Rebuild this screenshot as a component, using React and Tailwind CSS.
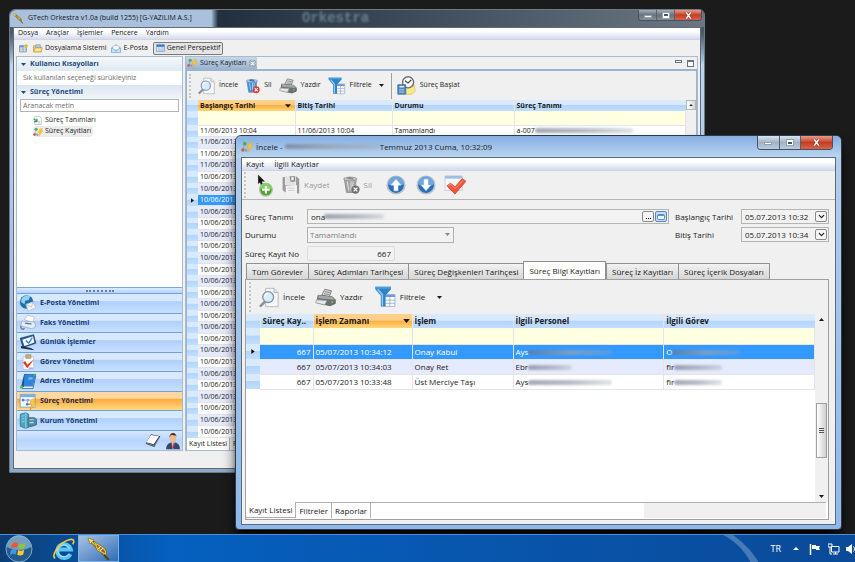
import { ChevronDown } from "lucide-react";

const menus = ["Dosya", "Araçlar", "İşlemler", "Pencere", "Yardım"];

const modules = [
  { name: "E-Posta Yönetimi", icon: GlobeIcon },
  { name: "Faks Yönetimi", icon: FaxIcon },
  { name: "Günlük İşlemler", icon: DailyIcon },
  { name: "Görev Yönetimi", icon: TaskIcon },
  { name: "Adres Yönetimi", icon: BookIcon },
  { name: "Süreç Yönetimi", icon: ProcessIcon, active: true },
  { name: "Kurum Yönetimi", icon: BuildingIcon },
];

const oldRows = Array.from({ length: 27 }, (_, i) => (i < 4 ? "11/06/2013 10:04" : "10/06/2013 10:04"));

const tabs = [
  "Tüm Görevler",
  "Süreç Adımları Tarihçesi",
  "Süreç Değişkenleri Tarihçesi",
  "Süreç Bilgi Kayıtları",
  "Süreç İz Kayıtları",
  "Süreç İçerik Dosyaları",
];

const records = [
  { no: 667, time: "05/07/2013 10:34:12", action: "Onay Kabul", person: "Ays", task: "O" },
  { no: 667, time: "05/07/2013 10:34:03", action: "Onay Ret", person: "Ebr", task: "fir" },
  { no: 667, time: "05/07/2013 10:33:48", action: "Üst Merciye Taşı", person: "Ays", task: "fir" },
];

const headBg = "bg-linear-to-b from-[#d9eaff] from-45% via-[#b3d4fd] via-50% to-[#c1deff]";
const sortBg = "bg-linear-to-b from-[#ffd08a] from-45% via-[#ffad3d] via-50% to-[#ffd77c]";

/* ---------- icons ---------- */

function TrumpetIcon({ className }) {
  return (
    <svg viewBox="0 0 24 24" className={className} aria-hidden="true">
      <path d="M3 3l15 15" stroke="#6e5012" strokeWidth="3" />
      <path d="M3 3l15 15" stroke="#f1cf55" strokeWidth="1.600" />
      <path d="M8 6l8 5c2 2 3 4 2.500 6L11 13z" fill="none" stroke="#7a5914" strokeWidth="2.200" />
      <path d="M8 6l8 5c2 2 3 4 2.500 6L11 13z" fill="none" stroke="#e6bd3c" strokeWidth="1.200" />
      <path d="M11 12l3-3M13 14l3-3" stroke="#fff0a0" strokeWidth="1" />
      <path d="M17 18l5 5" stroke="#54400f" strokeWidth="2" />
      <path d="M1 1l6 2-4 4z" fill="#f7de72" stroke="#8a6613" strokeWidth=".6" />
    </svg>
  );
}

function FlowIcon({ className }) {
  return (
    <svg viewBox="0 0 16 16" className={className} aria-hidden="true">
      <path d="M5 4L3 11h5" stroke="#8a98a8" strokeWidth="1" fill="none" />
      <circle cx="5" cy="3.500" r="2.500" fill="#4fae4a" />
      <circle cx="2.500" cy="12" r="2.200" fill="#d05a4b" />
      <circle cx="7" cy="12.500" r="1.700" fill="#8aa0c4" />
      <path d="M11 3l4-1-2 4h3l-7 9 2-6H8z" fill="#ffc629" stroke="#e2a01c" strokeWidth=".5" />
    </svg>
  );
}

function SearchDocIcon({ className }) {
  return (
    <svg viewBox="0 0 24 24" className={className} aria-hidden="true">
      <path d="M8 1h10l5 5v17H8z" fill="#f7f8fa" stroke="#a9b0b8" />
      <path d="M18 1v5h5" fill="#dfe4ea" stroke="#a9b0b8" />
      <path d="M2 22l6-6" stroke="#8b8f96" strokeWidth="3" strokeLinecap="round" />
      <circle cx="11" cy="11.500" r="6.500" fill="#d9ecfb" stroke="#8194a8" strokeWidth="1.600" />
      <path d="M7 11a4 4 0 014-4" stroke="#fff" strokeWidth="1.500" fill="none" />
    </svg>
  );
}

function TrashIcon({ className, muted }) {
  return (
    <svg viewBox="0 0 24 24" className={className} aria-hidden="true">
      <path d="M3 4h16l-2 18H6z" fill={muted ? "#a3a3a3" : "#3f8fd8"} stroke={muted ? "#8a8a8a" : "#4b87bb"} />
      <path d="M7 7l2 12M12 7v12M15 7l-1 10" stroke={muted ? "#dcdcdc" : "#9fd0f8"} strokeWidth="1.500" />
      <ellipse cx="11" cy="4" rx="9" ry="2.500" fill={muted ? "#c9c9c9" : "#a7cdea"} stroke={muted ? "#8c8c8c" : "#7f97b0"} />
      <path d="M6 4l3-3 5 1 2 3z" fill={muted ? "#8a8a8a" : "#4c6f96"} />
      <circle cx="18" cy="18" r="5.500" fill={muted ? "#6e6e6e" : "#e5382e"} />
      <path d="M15.500 15.500l5 5m0-5l-5 5" stroke="#fff" strokeWidth="1.800" />
    </svg>
  );
}

function PrinterIcon({ className }) {
  return (
    <svg viewBox="0 0 28 24" className={className} aria-hidden="true">
      <path d="M9 9l4-8 9 2-3 8z" fill="#d5d5d5" stroke="#666" />
      <path d="M13 4l7 1.500M12 7l7 1" stroke="#777" />
      <path d="M4 9l19 2 4 4v5l-7 3-17-4z" fill="#6d7276" stroke="#4d5154" />
      <path d="M4 9l19 2 3 4-21-2z" fill="#a3a7aa" />
      <path d="M2 15l14 1-3 6-12-3z" fill="#e5e7e9" stroke="#8b8f92" />
      <circle cx="23" cy="18" r="1.200" fill="#6fd04e" />
    </svg>
  );
}

function FunnelIcon({ className }) {
  return (
    <svg viewBox="0 0 26 28" className={className} aria-hidden="true">
      <path d="M12 11h13v15H12z" fill="#fff" stroke="#8aa6cf" />
      <path d="M12 11h13v3H12z" fill="#6f9bdc" />
      <path d="M12 18h13M12 22h13M18.500 14v12" stroke="#8aa6cf" />
      <path d="M0 1h20v3l-7 8v14H7V12L0 4z" fill="#2d83c6" />
      <path d="M0 1h20v2.500H0z" fill="#4f9edb" />
      <path d="M3 4l6 7v14" stroke="#8cc9f2" strokeWidth="2" fill="none" />
    </svg>
  );
}

function ClockIcon({ className }) {
  return (
    <svg viewBox="0 0 24 24" className={className} aria-hidden="true">
      <path d="M11 14l11-3 1 8-4 4-7 1z" fill="#f4ea8c" stroke="#d2c35a" strokeWidth=".8" />
      <circle cx="14" cy="8" r="7" fill="#fbfbfb" stroke="#6c7075" strokeWidth="1.800" />
      <path d="M10 6l4 3 4-4" stroke="#333" strokeWidth="1.400" fill="none" />
      <path d="M1 11h10v12H1z" fill="#4d87bb" stroke="#3e6b93" />
      <path d="M3 12.500h6v2H3z" fill="#cfe8ff" />
      <path d="M3 17.500h6M3 20.500h6" stroke="#d3e5f5" strokeWidth="1.600" strokeDasharray="1.500 1" />
    </svg>
  );
}

function FloppyIcon({ className }) {
  return (
    <svg viewBox="0 0 24 24" className={className} aria-hidden="true">
      <path d="M2 2h3v10h14V1l4 3v19l-3-1v-9H6v8H5l-3-3z" fill="#9b9b9b" />
      <path d="M5 1h13v11H6z" fill="#e2e2e2" />
      <path d="M11 1h7v7h-6z" fill="#8d8d8d" />
      <path d="M13 2h3v4h-3z" fill="#f3f3f3" />
      <path d="M6 13l14-1v9l-13 1z" fill="#f2f2f2" />
      <path d="M9 16h8M9 19h8" stroke="#c6c6c6" />
    </svg>
  );
}

function RoundArrow({ className, down }) {
  return (
    <svg viewBox="0 0 24 24" className={className} aria-hidden="true">
      <circle cx="12" cy="12" r="10.500" fill="#2c6db8" stroke="#b9c3cd" strokeWidth="2" />
      <path d="M2.500 11a9.500 9.500 0 0119 0c-5 3-14 3-19 0z" fill="#6ea6dd" />
      <path
        d={down ? "M12 19l-6-7h3.500V5h5v7H18z" : "M12 5l6 7h-3.500v7h-5v-7H6z"}
        fill="#fff"
        stroke="#cfe0f2"
        strokeWidth=".5"
      />
    </svg>
  );
}

function CheckWindowIcon({ className }) {
  return (
    <svg viewBox="0 0 24 22" className={className} aria-hidden="true">
      <path d="M1 1h19v16H1z" fill="#f4f8fd" stroke="#c3d0e0" />
      <path d="M1 1h19v3H1z" fill="#a3bedd" />
      <path d="M3 12l4-3 5 4 8-9 4 3-12 14z" fill="#f4543a" stroke="#d23a22" strokeWidth=".8" />
      <path d="M4 12l3-2 5 5 9-9" stroke="#ff9a7d" fill="none" />
    </svg>
  );
}

function AddIcon({ className }) {
  return (
    <svg viewBox="0 0 18 24" className={className} aria-hidden="true">
      <path d="M2 0l8 8H6.500L8 12 5.500 13 4 9 2 11z" fill="#111" stroke="#fff" strokeWidth=".5" />
      <circle cx="10.500" cy="16.500" r="6.700" fill="#4aa52b" stroke="#b5bfb0" strokeWidth="1.500" />
      <path d="M4.500 15a6 6 0 0112 0c-3 2-9 2-12 0z" fill="#86cf66" />
      <path d="M10.500 12.500v8M6.500 16.500h8" stroke="#fff" strokeWidth="2.200" />
    </svg>
  );
}

function GlobeIcon({ className }) {
  return (
    <svg viewBox="0 0 24 24" className={className} aria-hidden="true">
      <circle cx="10" cy="10" r="9.500" fill="#1f6fae" />
      <path d="M3 5c4-5 9-5 12-3l-2 5-5 1-1 5-5-3zM12 13l6-4 2 4-5 5z" fill="#8fd4ea" />
      <path d="M9 13l10-3 4 8-11 5z" fill="#f4f4f4" stroke="#b3b9bf" />
      <path d="M9 13l8 4 2-7" fill="none" stroke="#b3b9bf" />
    </svg>
  );
}

function FaxIcon({ className }) {
  return (
    <svg viewBox="0 0 24 24" className={className} aria-hidden="true">
      <path d="M7 8l4-6 10 2-2 8z" fill="#fff" stroke="#a9b7ca" />
      <path d="M3 10l18 1 2 6-5 4-16-4z" fill="#e6edf5" stroke="#8fa2bd" />
      <path d="M8 13l9 1" stroke="#4779b8" strokeWidth="2" />
      <path d="M2 17c-1 4 3 6 5 3" stroke="#6d7b8e" strokeWidth="2" fill="none" />
    </svg>
  );
}

function DailyIcon({ className }) {
  return (
    <svg viewBox="0 0 24 24" className={className} aria-hidden="true">
      <path d="M1 6l19-5 3 12-18 6z" fill="#285d9c" stroke="#173e6e" />
      <path d="M4 8l15-5 2 9-14 5z" fill="#fff" />
      <path d="M9 9l4 4 5-8" stroke="#3a86d2" strokeWidth="2" fill="none" />
      <path d="M2 17l15 3 4 3-19-3z" fill="#1b2d46" />
    </svg>
  );
}

function TaskIcon({ className }) {
  return (
    <svg viewBox="0 0 24 24" className={className} aria-hidden="true">
      <path d="M5 4h15v18H5z" fill="#fdfdfd" stroke="#b4bcc6" />
      <path d="M9 1h7v5H9z" fill="#c9b27a" stroke="#a08e5c" />
      <path d="M5 12l6 8L21 7l-10 8-3-5z" fill="#e5331f" />
      <path d="M13 20h6" stroke="#8db2e0" strokeWidth="2" />
    </svg>
  );
}

function BookIcon({ className }) {
  return (
    <svg viewBox="0 0 24 24" className={className} aria-hidden="true">
      <path d="M7 2h16l-4 17H3z" fill="#2a7fd1" stroke="#174f8c" />
      <path d="M3 19l1 3h15l4-18" fill="#e9eef4" stroke="#174f8c" />
      <path d="M7 2L3 19l3 1 4-18z" fill="#174f8c" />
      <path d="M7 2h16l-4 17H6z" fill="#2f86d8" />
      <path d="M13 6h6l-1 3h-6z" fill="#7db9ee" />
      <path d="M1 18h4v4H1zM20 1h3v3h-3z" fill="#58b34b" />
    </svg>
  );
}

function ProcessIcon({ className }) {
  return (
    <svg viewBox="0 0 24 24" className={className} aria-hidden="true">
      <path d="M1 2h21v18H1z" fill="#f8fbff" stroke="#5d8fc9" />
      <path d="M1 2h21v4H1z" fill="#79b0e6" />
      <path d="M5 10h6v6h5M11 10h5" stroke="#7088a8" fill="none" />
      <circle cx="5" cy="10" r="2" fill="#4a77c4" />
      <circle cx="11" cy="16" r="2" fill="#4a77c4" />
      <circle cx="12" cy="10" r="2" fill="#8aa9dc" />
      <path d="M17 9l6-1-3 5h4l-9 11 2-8h-3z" fill="#ffc83a" stroke="#d68b12" strokeWidth=".7" />
    </svg>
  );
}

function BuildingIcon({ className }) {
  return (
    <svg viewBox="0 0 24 24" className={className} aria-hidden="true">
      <path d="M1 3l8-2 4 2v19l-5 1-7-3z" fill="#4aa5c4" stroke="#29728e" />
      <path d="M9 1v22M3 6l4-1M3 10l4-1M3 14l4-1" stroke="#b9e6f3" />
      <path d="M12 8h9l3 2v8l-9 3-3-2z" fill="#4d8ea6" stroke="#35606f" />
      <path d="M14 11h6M14 15h6" stroke="#bcd7e6" strokeWidth="1.500" />
    </svg>
  );
}

function NotepadIcon({ className }) {
  return (
    <svg viewBox="0 0 24 24" className={className} aria-hidden="true">
      <path d="M9 2l14 3-9 16-13-5z" fill="#333a44" />
      <path d="M9 3l12 2-8 12-11-3z" fill="#fbfcfe" />
      <path d="M2 15l12 4 8-13" stroke="#9aa3ae" strokeWidth="1" fill="none" />
    </svg>
  );
}

function PersonIcon({ className }) {
  return (
    <svg viewBox="0 0 20 26" className={className} aria-hidden="true">
      <path d="M0 25c0-7 4-9 7-10h6c4 1 7 3 7 10z" fill="#384668" />
      <path d="M8 15h4l-1 9H9z" fill="#fff" />
      <path d="M9.500 16h1.500l.5 6-1.200 2-1.300-2z" fill="#b9303a" />
      <ellipse cx="10" cy="8.500" rx="4.500" ry="6.500" fill="#f0b98d" />
      <path d="M5 8c-1-8 10-9 10-1l-1-2c-3 0-5 0-7-1z" fill="#4a2f1c" />
    </svg>
  );
}

function GridPlusIcon({ className }) {
  return (
    <svg viewBox="0 0 16 16" className={className} aria-hidden="true">
      <path d="M1 3h12v11H1z" fill="#fff" stroke="#6d88a8" strokeWidth="1.500" />
      <path d="M1 7h12M7 7v7M1 10.500h12" stroke="#6d88a8" strokeWidth="1.200" />
      <path d="M1 3h8v3H1z" fill="#6ca0dc" />
      <path d="M12.500 0v7M9 3.500h7" stroke="#e6b422" strokeWidth="2.200" />
    </svg>
  );
}

function FolderIcon({ className }) {
  return (
    <svg viewBox="0 0 18 16" className={className} aria-hidden="true">
      <path d="M1 3h6l2 2h6v9H1z" fill="#f3cf6a" stroke="#b58a20" />
      <path d="M5 1h8v6H5z" fill="#a8cdf2" stroke="#4f80b5" strokeWidth=".7" />
      <path d="M1 14l3-7h13l-3 7z" fill="#ffe79a" stroke="#b58a20" />
    </svg>
  );
}

function MailIcon({ className }) {
  return (
    <svg viewBox="0 0 18 16" className={className} aria-hidden="true">
      <path d="M1 7l8-6 8 6v8H1z" fill="#a9cff4" stroke="#6b9fd2" />
      <path d="M4 3h10v7H4z" fill="#fff" stroke="#9dbbd9" strokeWidth=".7" />
      <path d="M1 7l8 6 8-6v8H1z" fill="#d3e8fb" stroke="#6b9fd2" />
    </svg>
  );
}

function PerspectiveIcon({ className }) {
  return (
    <svg viewBox="0 0 16 14" className={className} aria-hidden="true">
      <path d="M1 1h14v12H1z" fill="#e9f3fd" stroke="#4a7fb9" />
      <path d="M1 1h14v4H1z" fill="#3f7cc0" />
      <path d="M5 5v8M5 9h10" stroke="#6b9bd0" />
      <path d="M9 6.500h4M8 11h5" stroke="#8bb4e0" strokeWidth="1.500" />
    </svg>
  );
}

function DefinitionIcon({ className }) {
  return (
    <svg viewBox="0 0 16 16" className={className} aria-hidden="true">
      <path d="M3 1h9l3 3v11H3z" fill="#fdfdfd" stroke="#a3abb4" />
      <path d="M1 5l6 4M7 5v5H2" stroke="#35a046" strokeWidth="2.200" fill="none" />
      <path d="M9 10h4M9 12.500h4" stroke="#7aa6d6" />
    </svg>
  );
}

function StartOrb({ className }) {
  return (
    <svg viewBox="0 0 28 28" className={className} aria-hidden="true">
      <circle cx="14" cy="14" r="13" fill="#245a8e" stroke="#7fa9cb" />
      <path d="M2 12a12 12 0 0124 0c-6 4-18 4-24 0z" fill="#8db5d3" opacity=".75" />
      <path d="M7 9c2-2 4-2 6-1l-1 5c-2-1-4-1-6 1z" fill="#f0572b" />
      <path d="M14.500 8.500c2 1 4 1 6-1l-1 5.500c-2 1.500-4 1-6 .3z" fill="#8cc63e" />
      <path d="M5.800 15.500c2-2 4-1.500 6-1l-1 5c-2-1-4-1-6 1z" fill="#3a9de0" />
      <path d="M13.200 15c2 1 4 1 6-.5l-1 5c-2 1.500-4 1.200-6 .3z" fill="#fcc92f" />
    </svg>
  );
}

function ExplorerIcon({ className }) {
  return (
    <svg viewBox="0 0 26 26" className={className} aria-hidden="true">
      <path d="M20.500 18.500a7.500 7.500 0 11.500-5H7" fill="none" stroke="#5cc3f5" strokeWidth="4.200" />
      <path d="M19 18a6.500 6.500 0 11.500-5" fill="none" stroke="#b7e8ff" strokeWidth="1" />
      <path d="M4 23C-1 21 8 6 19 3c6-1.500 6 2 4 5" fill="none" stroke="#f6c93b" strokeWidth="1.800" />
    </svg>
  );
}

function CaretDown({ className }) {
  return (
    <svg viewBox="0 0 10 6" className={className} aria-hidden="true">
      <path d="M0 0h10L5 6z" fill="currentColor" />
    </svg>
  );
}

/* ---------- shared parts ---------- */

function Smudge({ className }) {
  return (
    <span
      className={`inline-block h-[5px] rounded-full bg-linear-to-r from-gray-500/60 via-gray-400/70 to-gray-400/30 align-middle blur-[1px] ${className}`}
    />
  );
}

function Grip({ className }) {
  return <span className={`w-0 shrink-0 border-l-2 border-dotted border-[#c6c6c6] ${className}`} />;
}

function WindowButtons({ dark, className }) {
  const base = dark
    ? "bg-linear-to-b from-[#a3adb6] via-[#66727e] to-[#84919d]"
    : "bg-linear-to-b from-[#dbe6f1] via-[#9fb3ca] to-[#b8cbe0]";
  return (
    <div className={`flex shrink-0 self-start overflow-hidden rounded-b border border-t-0 border-[#46535f] ${className}`}>
      <button aria-label="Simge durumuna küçült" className={`flex flex-4 items-center justify-center border-r border-[#55626e] ${base}`}>
        <span className="mt-[2px] h-[3px] w-2 border border-gray-400 bg-white" />
      </button>
      <button aria-label="Ekranı kapla" className={`flex flex-4 items-center justify-center border-r border-[#55626e] ${base}`}>
        <span className="flex h-[7px] w-2 items-center justify-center border border-gray-400 bg-white">
          <span className="h-[2px] w-1 bg-gray-600" />
        </span>
      </button>
      <button aria-label="Kapat" className="flex flex-6 items-center justify-center bg-linear-to-b from-[#e79b8b] via-[#c43c22] to-[#d8644a]">
        <svg viewBox="0 0 10 8" className="h-[7px] w-[9px]" aria-hidden="true">
          <path d="M1 0h2.500L5 2.200 6.500 0H9L6.500 4 9 8H6.500L5 5.800 3.500 8H1l2.500-4z" fill="#fff" stroke="#5b2018" strokeWidth=".5" />
        </svg>
      </button>
    </div>
  );
}

function ToolButton({ icon, label, disabled, className }) {
  return (
    <button disabled={disabled} className={`flex items-center gap-1 whitespace-nowrap disabled:text-[#9a9a9a] ${className || ""}`}>
      {icon}
      {label}
    </button>
  );
}

/* ---------- main window ---------- */

function Sidebar() {
  return (
    <aside className="flex w-[167px] shrink-0 flex-col border border-[#a9bccf] bg-white">
      <h2 className="flex h-[14px] items-center gap-1 bg-linear-to-b from-[#f4f8fb] to-[#dfe9f2] px-1 font-bold text-[#1c4a80]">
        <CaretDown className="h-[3px] w-[5px]" />
        Kullanıcı Kısayolları
      </h2>
      <p className="flex h-[14px] items-center px-[6px] text-[#6b6b6b]">Sık kullanılan seçeneği sürükleyiniz</p>
      <h2 className="flex h-[14px] items-center gap-1 bg-linear-to-b from-[#dbe6f0] to-[#f1f6fa] px-1 font-bold text-[#1c4a80]">
        <CaretDown className="h-[3px] w-[5px]" />
        Süreç Yönetimi
      </h2>
      <input
        aria-label="Aranacak metin"
        placeholder="Aranacak metin"
        className="mx-[3px] h-[13px] border border-[#b4b4b4] bg-white px-[2px] placeholder-[#6b6b6b] outline-none"
      />
      <ul className="flex-1 pt-[3px] pl-4">
        <li>
          <button className="flex h-[11px] items-center gap-[3px]">
            <DefinitionIcon className="h-[9px] w-[9px]" />
            Süreç Tanımları
          </button>
        </li>
        <li>
          <button className="flex h-[11px] items-center gap-[2px] rounded-sm bg-[#ececec] pr-[2px]">
            <FlowIcon className="h-[10px] w-[10px]" />
            Süreç Kayıtları
          </button>
        </li>
      </ul>
      <div className="flex h-[6px] items-center justify-center border-t border-[#7ea6dc] bg-linear-to-b from-[#dcebff] to-[#b6d3fb]">
        <span className="w-7 border-t-2 border-dotted border-[#6d8098]" />
      </div>
      <nav className="flex h-[137px] flex-col">
        {modules.map(({ name, icon: Icon, active }) => (
          <button
            key={name}
            className={`flex flex-1 items-center gap-[3px] border-t border-[#6f9fdc] px-[2px] font-bold ${
              active
                ? "bg-linear-to-b from-[#ffd9a0] from-35% via-[#fea83a] via-40% to-[#ffdb82] text-[#1a2b4c]"
                : "bg-linear-to-b from-[#d8e8ff] from-35% via-[#b0d0fb] via-40% to-[#c7e0ff] text-[#163a74]"
            }`}
          >
            <Icon className="h-[17px] w-[18px]" />
            {name}
          </button>
        ))}
      </nav>
      <div className="flex h-5 items-center justify-end gap-1 border-t border-[#6f9fdc] bg-linear-to-b from-[#d8e8ff] via-[#b6d4fc] to-[#c7e0ff] px-[2px]">
        <NotepadIcon className="h-4 w-[18px]" />
        <PersonIcon className="h-[18px] w-[14px]" />
      </div>
    </aside>
  );
}

function RecordList() {
  const cell = "overflow-hidden border-r border-b border-[#e3e3ea] p-0 pl-[2px] whitespace-nowrap";
  return (
    <div className="flex min-h-0 flex-1 overflow-hidden">
      <table className="h-full flex-1 table-fixed border-collapse bg-white leading-[10px]">
        <colgroup>
          <col className="w-[11px]" />
          <col className="w-[97px]" />
          <col className="w-[97px]" />
          <col className="w-[122px]" />
          <col />
        </colgroup>
        <thead>
          <tr className={`h-[11px] text-left ${headBg}`}>
            <th className="p-0" />
            <th className={`p-0 pl-[2px] ${sortBg}`}>
              <span className="flex items-center justify-between pr-1">
                Başlangıç Tarihi
                <CaretDown className="h-1 w-[6px]" />
              </span>
            </th>
            <th className="border-l border-[#dbe7f5] p-0 pl-[2px]">Bitiş Tarihi</th>
            <th className="border-l border-[#dbe7f5] p-0 pl-[2px]">Durumu</th>
            <th className="border-l border-[#dbe7f5] p-0 pl-[2px]">Süreç Tanımı</th>
          </tr>
          <tr className="h-[14px] bg-[#ffffe1]">
            <td className={headBg} />
            <td className={cell} />
            <td className={cell} />
            <td className={cell} />
            <td className={cell} />
          </tr>
        </thead>
        <tbody>
          {oldRows.map((date, i) => (
            <tr key={i} className={i === 6 ? "bg-[#3399ff] text-white" : i % 2 ? "bg-[#e6eafd]" : "bg-white"}>
              <td className={`p-0 ${headBg}`}>
                {i === 6 && (
                  <svg viewBox="0 0 4 6" className="mx-auto h-[5px] w-[3px]" aria-hidden="true">
                    <path d="M0 0l4 3-4 3z" fill="#111" />
                  </svg>
                )}
              </td>
              <td className={cell}>{date}</td>
              <td className={cell}>{i === 0 && date}</td>
              <td className={cell}>{i === 0 && "Tamamlandı"}</td>
              <td className={cell}>
                {i === 0 && (
                  <>
                    a-007
                    <Smudge className="w-[98px]" />
                  </>
                )}
              </td>
            </tr>
          ))}
        </tbody>
      </table>
      <div className="w-[10px] shrink-0 bg-[#f0f0f0]">
        <button aria-label="Yukarı" className="flex h-[10px] w-full items-center justify-center border border-[#b5b5b5] bg-linear-to-r from-white to-[#d5d5d5]">
          <CaretDown className="h-[2px] w-1 rotate-180" />
        </button>
      </div>
    </div>
  );
}

function MainWindow() {
  return (
    <section className="absolute top-[9px] right-[150px] bottom-[89px] left-[9px] flex flex-col rounded-t-md border border-[#6c7b8a] bg-linear-to-b from-[#4d5b69] from-5% via-[#bcd6f2] via-12% to-[#8fa9c9] px-[3px] pb-[3px] text-[7px]">
      <header className="relative -mx-[3px] flex h-[17px] items-center gap-1 rounded-t-md bg-linear-to-r from-[#a9c1dc] from-29% via-[#22303e] via-30% to-[#6b7884] pr-[2px] pl-[3px]">
        <span className="absolute left-[292px] font-['Liberation_Mono',monospace] text-[14px] font-bold text-[#8fa6bd]/60 blur-[1px]" aria-hidden="true">
          Orkestra
        </span>
        <TrumpetIcon className="h-[11px] w-[11px]" />
        <h1 className="flex-1 whitespace-nowrap text-[#101820]">GTech Orkestra v1.0a (build 1255) [G-YAZILIM A.S.]</h1>
        <WindowButtons dark className="h-[11px] w-16" />
      </header>
      <div className="flex min-h-0 flex-1 flex-col border border-[#5f6b77] bg-[#f0f0f0]">
        <nav className="flex h-3 items-center gap-2 border-b border-[#d0d4e2] bg-linear-to-b from-white from-30% to-[#d5dbee] px-1">
          {menus.map((m) => (
            <button key={m}>{m}</button>
          ))}
        </nav>
        <div className="flex h-4 shrink-0 items-center gap-[5px] px-[5px] whitespace-nowrap">
          <button aria-label="Perspektif aç">
            <GridPlusIcon className="h-[9px] w-[9px]" />
          </button>
          <button className="flex items-center gap-[2px]">
            <FolderIcon className="h-[9px] w-[10px]" />
            Dosyalama Sistemi
          </button>
          <button className="flex items-center gap-[2px]">
            <MailIcon className="h-[9px] w-[10px]" />
            E-Posta
          </button>
          <button className="flex h-[13px] items-center gap-[2px] rounded-xs border border-[#7b7b7b] bg-[#e4e4e4] px-[2px]">
            <PerspectiveIcon className="h-[8px] w-[9px]" />
            Genel Perspektif
          </button>
        </div>
        <div className="flex min-h-0 flex-1 gap-[2px] px-[2px]">
          <Sidebar />
          <main className="flex min-w-0 flex-1 flex-col border border-[#a9bccf]">
            <div className="flex h-[14px] shrink-0 items-center justify-between border-b-2 border-[#99b4d1]">
              <button className="flex h-full items-center gap-[3px] bg-linear-to-b from-[#c6d7e9] to-[#99b4d1] px-px whitespace-nowrap">
                <FlowIcon className="h-[10px] w-[10px]" />
                Süreç Kayıtları
                <svg viewBox="0 0 8 8" className="h-[7px] w-[7px]" aria-hidden="true">
                  <path d="M1 1h1.500L4 2.500 5.500 1H7v1.500L5.500 4 7 5.500V7H5.500L4 5.500 2.500 7H1V5.500L2.500 4 1 2.500z" fill="#fff" stroke="#666" strokeWidth=".7" />
                </svg>
              </button>
              <span className="flex items-start gap-[5px] pr-[3px]">
                <button aria-label="Küçült" className="h-[3px] w-[7px] border border-gray-500 bg-white" />
                <button aria-label="Büyüt" className="h-[7px] w-[7px] border border-t-2 border-gray-500 bg-white" />
              </span>
            </div>
            <div className="flex min-h-0 flex-1 flex-col border-r border-l border-[#99b4d1]">
              <div className="flex h-[29px] shrink-0 items-center gap-[7px] pl-[2px]">
                <Grip className="h-6" />
                <ToolButton icon={<SearchDocIcon className="h-[18px] w-[17px]" />} label="İncele" />
                <ToolButton icon={<TrashIcon className="h-4 w-[15px]" />} label="Sil" />
                <ToolButton icon={<PrinterIcon className="h-4 w-[18px]" />} label="Yazdır" />
                <ToolButton icon={<FunnelIcon className="h-[18px] w-[18px]" />} label="Filtrele" />
                <button aria-label="Filtre seçenekleri">
                  <CaretDown className="h-[3px] w-[5px]" />
                </button>
                <span className="-mr-[2px] h-[26px] border-l border-[#a0a0a0]" />
                <ToolButton icon={<ClockIcon className="h-[19px] w-[19px]" />} label="Süreç Başlat" />
              </div>
              <RecordList />
              <div className="flex h-[12px] shrink-0 items-center bg-[#f0f0f0] whitespace-nowrap">
                <button className="h-full border-r border-[#b5b5b5] bg-white px-[2px]">Kayıt Listesi</button>
                <button className="h-full px-[3px]">Filtreler</button>
              </div>
            </div>
          </main>
        </div>
        <footer className="h-[17px] shrink-0" />
      </div>
    </section>
  );
}

/* ---------- detail window ---------- */

function DateField({ id, value }) {
  return (
    <div className="flex h-[15px] w-[88px] items-center border border-[#b5b5b5] bg-[#f2f2f2] p-px">
      <input id={id} defaultValue={value} className="min-w-0 flex-1 bg-transparent pl-[2px] outline-none" />
      <button aria-label="Tarih seç" className="flex h-full w-3 shrink-0 items-center justify-center rounded-xs border border-[#8a8a8a] bg-[#f4f4f4]">
        <ChevronDown className="h-[9px] w-[9px]" strokeWidth={3} />
      </button>
    </div>
  );
}

function DetailForm() {
  return (
    <form className="flex items-start gap-[6px] px-[3px] pt-[9px] whitespace-nowrap" onSubmit={(e) => e.preventDefault()}>
      <div className="grid flex-1 grid-cols-[62px_1fr] items-center gap-y-[3px]">
        <label htmlFor="tanim">Süreç Tanımı</label>
        <div className="relative flex h-[15px] items-center border border-[#b5b5b5] bg-[#f2f2f2] p-px">
          <input id="tanim" defaultValue="ona" className="min-w-0 flex-1 bg-transparent pl-[2px] outline-none" />
          <Smudge className="absolute left-4 w-[60px]" />
          <button aria-label="Seç" className="flex h-full w-3 items-center justify-center gap-px rounded-xs border border-[#8a8a8a] bg-[#f4f4f4] pt-1">
            <span className="h-px w-px bg-black" />
            <span className="h-px w-px bg-black" />
            <span className="h-px w-px bg-black" />
          </button>
          <button aria-label="Aç" className="ml-px flex h-full w-3 items-center justify-center rounded-xs border border-[#5c86bb] bg-[#c5dcf5]">
            <span className="h-[6px] w-2 rounded-xs border border-t-2 border-[#5c8fd0] bg-white" />
          </button>
        </div>
        <label htmlFor="durum">Durumu</label>
        <div className="relative w-[147px]">
          <select
            id="durum"
            disabled
            className="block h-[16px] w-full appearance-none border border-[#b0b0b0] bg-[#f2f2f2] pl-[2px] text-[#7d7d7d] opacity-100"
          >
            <option>Tamamlandı</option>
          </select>
          <CaretDown className="absolute top-[6px] right-1 h-[3px] w-[5px] opacity-50" />
        </div>
        <label htmlFor="kayitno">Süreç Kayıt No</label>
        <input
          id="kayitno"
          defaultValue="667"
          className="h-[15px] w-[88px] rounded-xs border border-[#dcdcdc] bg-[#f2f2f2] pr-[3px] text-right outline-none"
        />
      </div>
      <div className="grid grid-cols-[66px_auto] items-center gap-y-[3px] pr-[3px]">
        <label htmlFor="bas">Başlangıç Tarihi</label>
        <DateField id="bas" value="05.07.2013 10:32" />
        <label htmlFor="bit">Bitiş Tarihi</label>
        <DateField id="bit" value="05.07.2013 10:34" />
      </div>
    </form>
  );
}

function InfoTable() {
  const head = "border-l border-[#dbe7f5] p-0 pl-[2px] whitespace-nowrap";
  const cell = "overflow-hidden border-r border-b border-[#e3e3ea] p-0 pl-[2px] whitespace-nowrap";
  return (
    <table className="w-full table-fixed border-collapse leading-[12px]">
      <colgroup>
        <col className="w-[14px]" />
        <col className="w-[53px]" />
        <col className="w-[99px]" />
        <col className="w-[101px]" />
        <col />
        <col />
      </colgroup>
      <thead>
        <tr className={`h-[14px] text-left ${headBg}`}>
          <th className="p-0" />
          <th className={head}>Süreç Kay..</th>
          <th className={`${head} ${sortBg}`}>
            <span className="flex items-center justify-between pr-[2px]">
              İşlem Zamanı
              <CaretDown className="h-1 w-[7px]" />
            </span>
          </th>
          <th className={head}>İşlem</th>
          <th className={head}>İlgili Personel</th>
          <th className={head}>İlgili Görev</th>
        </tr>
        <tr className="h-4 bg-[#ffffe1]">
          <td className={headBg} />
          <td className={cell} />
          <td className={cell} />
          <td className={cell} />
          <td className={cell} />
          <td className={cell} />
        </tr>
      </thead>
      <tbody>
        {records.map((r, i) => (
          <tr key={r.time} className={`h-[15px] ${i === 0 ? "bg-[#3399ff] text-white" : i === 1 ? "bg-[#e6eafd]" : "bg-white"}`}>
            <td className={`p-0 ${headBg}`}>
              {i === 0 && (
                <svg viewBox="0 0 4 6" className="mx-auto h-[5px] w-1" aria-hidden="true">
                  <path d="M0 0l4 3-4 3z" fill="#111" />
                </svg>
              )}
            </td>
            <td className={`${cell} pr-[2px] text-right`}>{r.no}</td>
            <td className={cell}>{r.time}</td>
            <td className={cell}>{r.action}</td>
            <td className={cell}>
              {r.person}
              <Smudge className={i === 1 ? "w-11" : "w-[84px]"} />
            </td>
            <td className={cell}>
              {r.task}
              <Smudge className={i === 0 ? "w-[68px]" : "w-12"} />
            </td>
          </tr>
        ))}
      </tbody>
    </table>
  );
}

function DetailWindow() {
  return (
    <section className="absolute top-[135px] right-[13px] bottom-[32px] left-[235px] flex flex-col rounded-t-md rounded-b border border-[#2c3b4c] bg-linear-to-b from-[#b5cfea] to-[#8fb8ea] px-[5px] pb-1 text-[8px] leading-[12px] shadow-lg shadow-black">
      <header className="-mx-[5px] flex h-[21px] items-center gap-[3px] rounded-t-md bg-linear-to-b from-[#86aee2] to-[#bad6ee] pr-2 pl-[5px]">
        <FlowIcon className="h-3 w-3" />
        <h1 className="flex flex-1 items-center whitespace-pre">
          {"İncele - "}
          <Smudge className="w-[95px]" />
          Temmuz 2013 Cuma, 10:32:09
        </h1>
        <WindowButtons className="h-[14px] w-[76px]" />
      </header>
      <div className="flex min-h-0 flex-1 flex-col border border-[#5a6b7d] bg-[#f0f0f0]">
        <nav className="flex h-[13px] shrink-0 items-center gap-[10px] border-b border-[#d0d4e2] bg-linear-to-b from-white from-30% to-[#d5dbee] px-1">
          <button>Kayıt</button>
          <button>İlgili Kayıtlar</button>
        </nav>
        <div className="flex h-[29px] shrink-0 items-center border-b border-[#b5b5b5] pl-[2px]">
          <Grip className="mr-[10px] h-[26px]" />
          <button aria-label="Ekle" className="mr-2">
            <AddIcon className="h-[23px] w-[17px]" />
          </button>
          <ToolButton disabled icon={<FloppyIcon className="h-5 w-[19px]" />} label="Kaydet" className="mr-3" />
          <ToolButton disabled icon={<TrashIcon muted className="h-5 w-[18px]" />} label="Sil" className="mr-[14px]" />
          <button aria-label="Önceki" className="mr-[10px]">
            <RoundArrow className="h-5 w-5" />
          </button>
          <button aria-label="Sonraki" className="mr-2">
            <RoundArrow down className="h-5 w-5" />
          </button>
          <button aria-label="Onayla">
            <CheckWindowIcon className="h-5 w-[22px]" />
          </button>
        </div>
        <DetailForm />
        <div className="flex h-[18px] shrink-0 items-end px-1 whitespace-nowrap" role="tablist">
          {tabs.map((t, i) => (
            <button
              key={t}
              role="tab"
              aria-selected={i === 3}
              className={`border border-b-0 border-[#919191] px-[5px] ${
                i === 3 ? "h-[18px] bg-white" : "-mr-px h-4 bg-linear-to-b from-[#f2f2f2] to-[#d6d6d6]"
              }`}
            >
              {t}
            </button>
          ))}
        </div>
        <div className="mr-[6px] mb-1 ml-[3px] flex min-h-0 flex-1 flex-col border border-[#a0a0a0]">
          <div className="flex h-[34px] shrink-0 items-center pl-[3px]">
            <Grip className="mr-2 h-[30px]" />
            <ToolButton icon={<SearchDocIcon className="h-[21px] w-5" />} label="İncele" className="mr-[10px]" />
            <ToolButton icon={<PrinterIcon className="h-[19px] w-[21px]" />} label="Yazdır" className="mr-3" />
            <ToolButton icon={<FunnelIcon className="h-[22px] w-[21px]" />} label="Filtrele" className="mr-3" />
            <button aria-label="Filtre seçenekleri">
              <CaretDown className="h-[3px] w-[5px]" />
            </button>
          </div>
          <div className="flex min-h-0 flex-1 bg-white">
            <div className="min-w-0 flex-1">
              <InfoTable />
            </div>
            <div className="flex w-[13px] flex-col items-center bg-[#f0f0f0] py-1">
              <button aria-label="Yukarı">
                <CaretDown className="h-[3px] w-[5px] rotate-180" />
              </button>
              <span className="flex-9" />
              <span className="flex h-[55px] w-[11px] flex-col items-center justify-center gap-px border border-[#a0a0a0] bg-linear-to-r from-white to-[#cfcfcf]">
                <span className="h-px w-[5px] bg-gray-600" />
                <span className="h-px w-[5px] bg-gray-600" />
                <span className="h-px w-[5px] bg-gray-600" />
              </span>
              <span className="flex-4" />
              <button aria-label="Aşağı">
                <CaretDown className="h-[3px] w-[5px]" />
              </button>
            </div>
          </div>
          <div className="flex h-[17px] shrink-0 items-start bg-white pr-[2px] whitespace-nowrap">
            <button className="h-4 border-r border-b border-[#b0b0b0] px-[3px]">Kayıt Listesi</button>
            <button className="h-4 border-t border-r border-[#b0b0b0] px-[3px]">Filtreler</button>
            <button className="h-4 border-t border-r border-[#b0b0b0] px-[3px]">Raporlar</button>
            <span className="h-4 flex-3 border-t border-[#b0b0b0]" />
            <span className="h-4 flex-2 border-t border-[#b0b0b0] bg-[#f0f0f0]" />
          </div>
        </div>
      </div>
    </section>
  );
}

/* ---------- desktop ---------- */

function Taskbar() {
  return (
    <footer className="relative flex h-7 items-center overflow-hidden border-t border-[#4d8fd6] bg-linear-to-r from-[#0b3f78] via-[#0560bf] via-20% to-[#0a4a98]">
      <svg viewBox="0 0 120 28" className="absolute right-[60px] h-7 w-[120px]" aria-hidden="true">
        <path d="M48 0c12 6 22 16 28 28h8C76 14 66 6 58 0z" fill="#fff" opacity=".25" />
      </svg>
      <button aria-label="Başlat" className="ml-[5px]">
        <StartOrb className="h-7 w-7" />
      </button>
      <button aria-label="Internet Explorer" className="ml-[18px]">
        <ExplorerIcon className="h-6 w-[25px]" />
      </button>
      <button
        aria-label="Orkestra"
        className="ml-[2px] flex h-full w-[41px] items-center justify-center border border-[#7fb0e4] bg-linear-to-br from-[#a9c4e4] to-[#2b6cb5]"
      >
        <TrumpetIcon className="h-6 w-6" />
      </button>
      <div className="relative ml-auto flex items-center text-[9px] text-white">
        <span className="mr-3">TR</span>
        <button aria-label="Gizli simgeler" className="mr-[10px]">
          <svg viewBox="0 0 6 3" className="h-[3px] w-[6px]" aria-hidden="true">
            <path d="M0 3l3-3 3 3z" fill="#fff" />
          </svg>
        </button>
        <svg viewBox="0 0 12 12" className="mr-[7px] h-3 w-3" aria-hidden="true">
          <path d="M1.500 1v11" stroke="#fff" strokeWidth="1.500" />
          <path d="M3 2h4v1h4l-1 2 1 2H7V6H3z" fill="#fff" />
        </svg>
        <svg viewBox="0 0 12 12" className="mr-[6px] h-3 w-3" aria-hidden="true">
          <path d="M3.500 3.500H11V9H3.500zM5 11h5M7.500 9v2" stroke="#fff" fill="none" />
          <path d="M0 1h4v3H0zM2 4v7h2" stroke="#fff" fill="none" />
        </svg>
        <svg viewBox="0 0 9 12" className="h-3 w-[9px]" aria-hidden="true">
          <path d="M0 4h2l4-3v10L2 8H0z" fill="#fff" />
          <path d="M7.500 3.500c1.300 1.500 1.300 3.500 0 5" stroke="#fff" fill="none" />
        </svg>
      </div>
    </footer>
  );
}

export default function App() {
  return (
    <div className="flex h-screen flex-col overflow-hidden bg-[#1b1b1b] font-['Open_Sans','Noto_Sans',sans-serif] text-[#1a1a1a]">
      <div className="flex-1" />
      <MainWindow />
      <DetailWindow />
      <Taskbar />
    </div>
  );
}
